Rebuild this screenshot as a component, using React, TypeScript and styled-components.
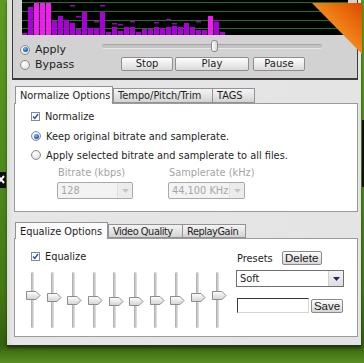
import React from 'react';
import styled, { createGlobalStyle } from 'styled-components';

const GlobalStyle = createGlobalStyle`
  html, body {
    margin: 0;
    padding: 0;
  }
  body {
    font-family: "DejaVu Sans", Verdana, sans-serif;
    font-size: 9.8px;
    color: #1e1e1e;
  }
`;

// spectrum bar tops (px from top of the 35px scope), one per 6px column
const bars = [33, 7, 3, 3, 3, 21, 16, 20, 23, 29, 12, 28, 28, 12, 32, 27, 31, 27, 27, 32, 29, 29, 27, 28, 27, 26, 27, 23, 27, 30, 30, 16, 22, 32];
const bright = [2, 3, 4, 31];
const peaks: [number, number][] = [
  [8, 5], [9, 16], [12, 21], [13, 5], [15, 23], [16, 24], [18, 21], [22, 22], [24, 19], [25, 23], [29, 21], [32, 20],
];
const eqThumbs = [295, 297, 300, 300, 301.5, 301.5, 300, 300, 297, 295];

const Page = styled.div`
  position: relative;
  width: 364px;
  height: 363px;
  overflow: hidden;
  background: linear-gradient(180deg, #5c9a22 0%, #4f8a1c 45%, #437814 80%, #355f0e 95%, #5a8f22 100%);
`;

const Window = styled.div`
  margin-left: 7px;
  width: 354px;
  height: 346px;
  box-sizing: border-box;
  padding: 0 3px 0 5px;
  display: flex;
  flex-direction: column;
  background: linear-gradient(90deg, #d9d9d9 0px, #e6e6e6 5px, #e4e4e4 100%);
  border-bottom: 1px solid #2b2b2b;
  box-shadow: 0 2px 3px rgba(0, 0, 0, 0.45);
`;

const TopPanel = styled.div`
  height: 80px;
  box-sizing: border-box;
  background: #d2d2d2;
  border: 1px solid #3a3a3a;
  border-top: none;
  border-bottom-width: 2px;
  display: flex;
  flex-direction: column;
`;

const Scope = styled.svg`
  display: block;
  margin-left: 9px;
  background: #000;
`;

const Controls = styled.div`
  flex: 1;
  display: grid;
  grid-template-columns: 82px 1fr;
  padding-left: 7px;
`;

const RadioGroup = styled.div`
  display: flex;
  flex-direction: column;
  padding-top: 7px;
  font-size: 11px;
`;

const OptionRow = styled.label`
  display: flex;
  align-items: center;
  height: 15px;
  gap: 5px;
  white-space: nowrap;
`;

const Radio = styled.span<{ $on?: boolean }>`
  position: relative;
  width: 10px;
  height: 10px;
  box-sizing: border-box;
  border-radius: 50%;
  border: 1px solid #8c8c8c;
  background: radial-gradient(circle at 40% 35%, #ffffff 0%, #e4e4e4 70%, #cfcfcf 100%);
  flex: none;
  &::after {
    content: '';
    display: ${(p) => (p.$on ? 'block' : 'none')};
    position: absolute;
    left: 1.5px;
    top: 1.5px;
    width: 5px;
    height: 5px;
    border-radius: 50%;
    background: radial-gradient(circle at 40% 35%, #7fc0ff 0%, #1f66c0 55%, #0d3d86 100%);
  }
`;

const Checkbox = styled.span`
  width: 9px;
  height: 9px;
  box-sizing: border-box;
  border: 1px solid #7d8aa6;
  background: #fff;
  display: flex;
  align-items: center;
  justify-content: center;
  flex: none;
`;

const CheckMark = () => (
  <svg width="7" height="7" viewBox="0 0 7 7">
    <path d="M1 3.5 L2.8 5.5 L6 1" fill="none" stroke="#2a4fb0" strokeWidth="1.4" />
  </svg>
);

const Transport = styled.div`
  display: flex;
  flex-direction: column;
  padding-top: 6px;
`;

const Seek = styled.div`
  position: relative;
  width: 220px;
  height: 10px;
  display: flex;
  align-items: center;
`;

const SeekGroove = styled.div`
  width: 100%;
  height: 3px;
  border-radius: 2px;
  background: #c2c2c2;
  border-top: 1px solid #a6a6a6;
  border-bottom: 1px solid #e8e8e8;
`;

const SeekThumb = styled.div`
  position: absolute;
  left: 109px;
  top: -1px;
  width: 5px;
  height: 10px;
  border-radius: 3px;
  border: 1px solid #8a8a8a;
  background: linear-gradient(90deg, #ffffff, #d6d6d6);
`;

const Buttons = styled.div`
  display: flex;
  gap: 2px;
  margin-top: 6px;
  margin-left: 19px;
`;

const Button = styled.button<{ $w: number }>`
  width: ${(p) => p.$w}px;
  height: 14px;
  padding: 0;
  border: 1px solid #8e8e8e;
  border-radius: 2px;
  background: linear-gradient(180deg, #fdfdfd 0%, #ececec 50%, #dadada 100%);
  font: 10px "DejaVu Sans", Verdana, sans-serif;
  color: #1e1e1e;
  line-height: 12px;
`;

const TabPanel = styled.div<{ $gap: number }>`
  margin-top: ${(p) => p.$gap}px;
  margin-left: 2px;
  display: flex;
  flex-direction: column;
`;

const TabRow = styled.div<{ $h: number }>`
  display: flex;
  align-items: flex-end;
  height: ${(p) => p.$h}px;
  padding-left: 1px;
`;

const Tab = styled.div<{ $active?: boolean; $w: number; $tight?: boolean }>`
  position: relative;
  width: ${(p) => p.$w}px;
  height: ${(p) => (p.$active ? 'calc(100% + 1px)' : 'calc(100% - 2px)')};
  margin-bottom: ${(p) => (p.$active ? '-1px' : '0')};
  z-index: ${(p) => (p.$active ? 1 : 0)};
  box-sizing: border-box;
  padding-left: 4px;
  display: flex;
  align-items: center;
  border: 1px solid #939393;
  border-bottom: ${(p) => (p.$active ? 'none' : '1px solid #939393')};
  border-right: ${(p) => (p.$active ? '1px solid #939393' : 'none')};
  background: ${(p) => (p.$active ? '#fbfbfb' : 'linear-gradient(180deg, #f3f3f3 0%, #e2e2e2 60%, #d2d2d2 100%)')};
  letter-spacing: ${(p) => (p.$tight ? '-0.45px' : '0')};
  white-space: nowrap;
  overflow: hidden;
  &:last-child {
    border-right: 1px solid #939393;
  }
`;

const TabBody = styled.div<{ $h: number }>`
  height: ${(p) => p.$h}px;
  box-sizing: border-box;
  border: 1px solid #9a9a9a;
  background: #fff;
`;

const NormalizeBody = styled(TabBody)`
  padding: 5px 0 0 16px;
  display: flex;
  flex-direction: column;
`;

const Line = styled(OptionRow)<{ $gap?: number }>`
  height: 14px;
  font-size: 9.8px;
  margin-top: ${(p) => p.$gap ?? 0}px;
`;

const Fields = styled.div`
  display: grid;
  grid-template-columns: 111px 80px;
  margin-left: 26px;
  margin-top: 4px;
`;

const FieldLabel = styled.div`
  height: 14px;
  line-height: 14px;
  padding-left: 1px;
  color: #a4a4a4;
  white-space: nowrap;
`;

const Select = styled.div<{ $w: number; $disabled?: boolean }>`
  width: ${(p) => p.$w}px;
  height: 17px;
  margin-top: 2px;
  box-sizing: border-box;
  display: flex;
  align-items: center;
  border: 1px solid ${(p) => (p.$disabled ? '#a9a9a9' : '#6f6f6f')};
  border-radius: ${(p) => (p.$disabled ? 2 : 0)}px;
  background: ${(p) => (p.$disabled ? '#f3f3f3' : '#fff')};
  color: ${(p) => (p.$disabled ? '#a6a6a6' : '#1e1e1e')};
  overflow: hidden;
`;

const SelectText = styled.span`
  flex: 1;
  padding-left: 3px;
  white-space: nowrap;
  overflow: hidden;
`;

const SelectArrow = styled.span<{ $disabled?: boolean }>`
  width: 14px;
  height: 100%;
  flex: none;
  display: flex;
  align-items: center;
  justify-content: center;
  background: ${(p) => (p.$disabled ? '#ececec' : 'linear-gradient(180deg, #f4f4f4, #dedede)')};
  border-left: 1px solid ${(p) => (p.$disabled ? '#e0e0e0' : '#d0d0d0')};
`;

const EqBody = styled(TabBody)`
  display: grid;
  grid-template-columns: 221px 1fr;
`;

const EqLeft = styled.div`
  display: flex;
  flex-direction: column;
  padding: 10px 0 0 16px;
`;

const Sliders = styled.div`
  display: flex;
  margin-top: 9px;
  margin-left: -9px;
`;

const SliderCol = styled.div`
  position: relative;
  width: 20.6px;
  height: 56px;
  display: flex;
  justify-content: center;
`;

const SliderTrack = styled.div`
  width: 3px;
  height: 100%;
  border-radius: 2px;
  background: linear-gradient(90deg, #a8a8a8, #cfcfcf 60%, #e2e2e2);
`;

const SliderThumb = styled.svg<{ $top: number }>`
  position: absolute;
  left: calc(50% - 6px);
  top: ${(p) => p.$top}px;
`;

const Presets = styled.div`
  display: flex;
  flex-direction: column;
  padding-top: 12px;
`;

const PresetHead = styled.div`
  display: flex;
  align-items: center;
  height: 14px;
  padding-left: 1px;
  gap: 9px;
`;

const SmallButton = styled.button<{ $w: number }>`
  width: ${(p) => p.$w}px;
  height: 14px;
  padding: 0;
  border: 1px solid #8a8a8a;
  border-radius: 2px;
  background: linear-gradient(180deg, #fbfbfb 0%, #e6e6e6 60%, #d6d6d6 100%);
  font: 11.5px "Liberation Sans", Arial, sans-serif;
  color: #1a1a1a;
  line-height: 12px;
`;

const SaveRow = styled.div`
  display: flex;
  align-items: center;
  gap: 2px;
  margin-top: 11px;
  padding-left: 1px;
`;

const TextBox = styled.div`
  width: 72px;
  height: 15px;
  box-sizing: border-box;
  background: #fff;
  border: 1px solid #d4d4d4;
  border-top-color: #3a3a3a;
  border-left-color: #3a3a3a;
`;

const Peel = styled.div`
  position: absolute;
  left: 312px;
  top: 3px;
  width: 50px;
  height: 51px;
  clip-path: polygon(0 0, 100% 0, 100% 100%);
  background: linear-gradient(225deg, #dc4a00 0%, #ec7410 35%, #f6a02a 70%, #f9b43c 100%);
`;

const EdgeTab = styled.svg`
  position: absolute;
  left: 0;
  top: 172px;
`;

const EdgeStrip = styled.div`
  position: absolute;
  right: 0;
  top: 120px;
  width: 2px;
  height: 67px;
  background: #101010;
`;

const Spectrum = () => (
  <Scope width="326" height="35">
    {[2.5, 11.5, 20.5, 28.5].map((y) => (
      <line key={y} x1="0" x2="326" y1={y} y2={y} stroke="#137a13" strokeWidth="1" />
    ))}
    {bars.map((top, i) => (
      <rect key={i} x={i * 6} y={top} width="5" height={35 - top} fill={bright.includes(i) ? '#f21cf2' : '#a800d6'} />
    ))}
    {peaks.map(([i, y]) => (
      <rect key={`p${i}`} x={i * 6} y={y} width="5" height="1.5" fill="#9a00c4" />
    ))}
  </Scope>
);

const Thumb = ({ top }: { top: number }) => (
  <SliderThumb $top={top} width="15" height="9" viewBox="0 0 15 9">
    <defs>
      <linearGradient id="eqthumb" x1="0" y1="0" x2="0" y2="1">
        <stop offset="0" stopColor="#ffffff" />
        <stop offset="1" stopColor="#d2d2d2" />
      </linearGradient>
    </defs>
    <path d="M0.5 0.5 H10 L14 4.5 L10 8.5 H0.5 Z" fill="url(#eqthumb)" stroke="#8c8c8c" />
  </SliderThumb>
);

const Arrow = ({ color }: { color: string }) => (
  <svg width="7" height="4" viewBox="0 0 7 4">
    <path d="M0 0 H7 L3.5 4 Z" fill={color} />
  </svg>
);

export default function App() {
  return (
    <Page>
      <GlobalStyle />
      <Window>
        <TopPanel>
          <Spectrum />
          <Controls>
            <RadioGroup>
              <OptionRow>
                <Radio $on />
                Apply
              </OptionRow>
              <OptionRow>
                <Radio />
                Bypass
              </OptionRow>
            </RadioGroup>
            <Transport>
              <Seek>
                <SeekGroove />
                <SeekThumb />
              </Seek>
              <Buttons>
                <Button $w={52}>Stop</Button>
                <Button $w={74}>Play</Button>
                <Button $w={52} style={{ marginLeft: 2 }}>Pause</Button>
              </Buttons>
            </Transport>
          </Controls>
        </TopPanel>

        <TabPanel $gap={6}>
          <TabRow $h={17}>
            <Tab $active $w={98}>Normalize Options</Tab>
            <Tab $w={99}>Tempo/Pitch/Trim</Tab>
            <Tab $w={43}>TAGS</Tab>
          </TabRow>
          <NormalizeBody $h={109}>
            <Line>
              <Checkbox>
                <CheckMark />
              </Checkbox>
              Normalize
            </Line>
            <Line $gap={6}>
              <Radio $on />
              Keep original bitrate and samplerate.
            </Line>
            <Line $gap={5}>
              <Radio />
              Apply selected bitrate and samplerate to all files.
            </Line>
            <Fields>
              <FieldLabel>Bitrate (kbps)</FieldLabel>
              <FieldLabel>Samplerate (kHz)</FieldLabel>
              <Select $w={76} $disabled>
                <SelectText>128</SelectText>
                <SelectArrow $disabled>
                  <Arrow color="#c4c4c4" />
                </SelectArrow>
              </Select>
              <Select $w={77} $disabled>
                <SelectText>44,100 KHz</SelectText>
                <SelectArrow $disabled>
                  <Arrow color="#c4c4c4" />
                </SelectArrow>
              </Select>
            </Fields>
          </NormalizeBody>
        </TabPanel>

        <TabPanel $gap={10}>
          <TabRow $h={16}>
            <Tab $active $w={93}>Equalize Options</Tab>
            <Tab $w={74} $tight>Video Quality</Tab>
            <Tab $w={64} $tight>ReplayGain</Tab>
          </TabRow>
          <EqBody $h={99}>
            <EqLeft>
              <Line>
                <Checkbox>
                  <CheckMark />
                </Checkbox>
                Equalize
              </Line>
              <Sliders>
                {eqThumbs.map((c, i) => (
                  <SliderCol key={i}>
                    <SliderTrack />
                    <Thumb top={c - 4.5 - 272} />
                  </SliderCol>
                ))}
              </Sliders>
            </EqLeft>
            <Presets>
              <PresetHead>
                Presets
                <SmallButton $w={40}>Delete</SmallButton>
              </PresetHead>
              <Select $w={108} style={{ marginTop: 5 }}>
                <SelectText>Soft</SelectText>
                <SelectArrow>
                  <Arrow color="#1b2a6b" />
                </SelectArrow>
              </Select>
              <SaveRow>
                <TextBox />
                <SmallButton $w={32}>Save</SmallButton>
              </SaveRow>
            </Presets>
          </EqBody>
        </TabPanel>
      </Window>
      <Peel />
      <EdgeTab width="6" height="16" viewBox="0 0 6 16">
        <rect width="6" height="16" fill="#0c0c0c" />
        <path d="M-2 4 L4 11 M-2 11 L4 4" stroke="#fff" strokeWidth="2" />
      </EdgeTab>
      <EdgeStrip />
    </Page>
  );
}
